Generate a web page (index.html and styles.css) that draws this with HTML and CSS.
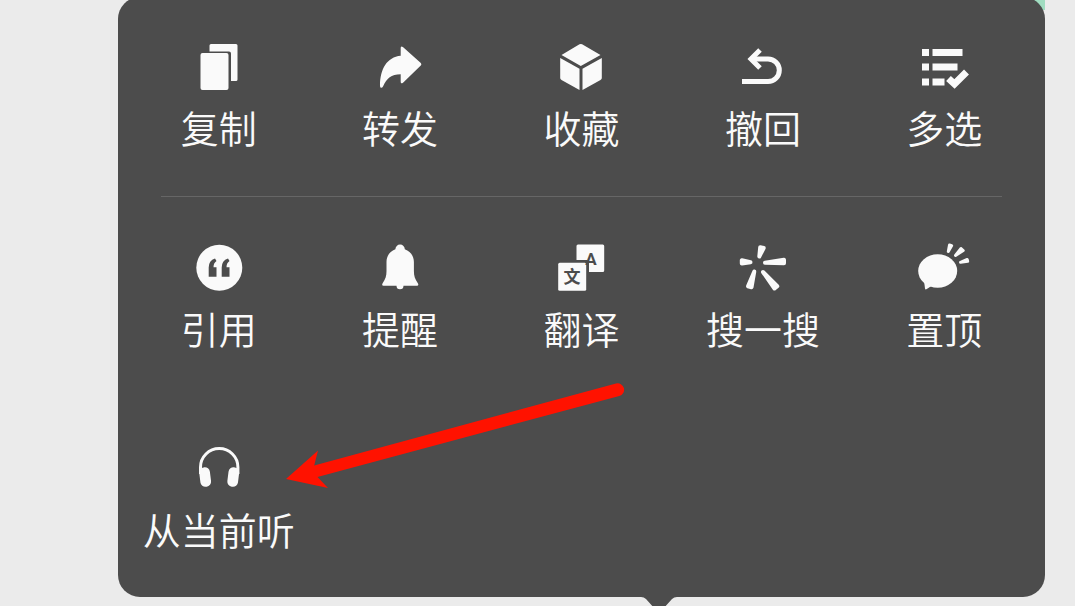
FILE: index.html
```html
<!DOCTYPE html>
<html lang="zh-CN">
<head>
    <meta charset="UTF-8">
    <meta name="viewport" content="width=device-width, initial-scale=1.0">
    <title>消息菜单</title>
    <link rel="stylesheet" href="styles.css">
</head>
<body>
    <div class="bubble"></div>
    <main class="menu">
        <div class="menu-row">
            <button class="item" type="button">
                <svg viewBox="0 0 48 48" aria-hidden="true">
                    <path d="M16 1h25a1.500 1.500 0 0 1 1.500 1.500v34a1.500 1.500 0 0 1-1.500 1.500H36V10.500q0-2-2-2H14.500v-6A1.500 1.500 0 0 1 16 1z"/>
                    <rect x="5.500" y="10" width="28" height="37" rx="2"/>
                </svg>
                <span>复制</span>
            </button>
            <button class="item" type="button">
                <svg viewBox="0 0 48 48" aria-hidden="true">
                    <path d="M24.700 12.700V5q0-2.500 2.200-1L44.800 20q1.200 1.200 0 2.500L27 39.800q-2.300 1.500-2.300-1V31.300C15 31.500 11 35 7 43.500q-.8 1.500-2 1.300-1-.2-1-2C4 26 11 14 24.700 12.700z"/>
                </svg>
                <span>转发</span>
            </button>
            <button class="item" type="button">
                <svg viewBox="0 0 48 48" aria-hidden="true">
                    <path d="M22.500 1.300q1.300-.8 2.600 0L43.500 12 23.800 22.900 4.500 12z"/>
                    <path d="M3.200 15l19.300 10.700V47L4.500 37q-1.300-.8-1.300-2z"/>
                    <path d="M44.800 15L25.500 25.700V47l18-10q1.300-.8 1.300-2z"/>
                </svg>
                <span>收藏</span>
            </button>
            <button class="item" type="button">
                <svg class="line" viewBox="0 0 48 48" aria-hidden="true">
                    <path d="M3 38.500h26a11.300 11.300 0 0 0 0-22.600H12"/>
                    <path d="M21 7l-9 9 9 9"/>
                </svg>
                <span>撤回</span>
            </button>
            <button class="item" type="button">
                <svg viewBox="0 0 48 48" aria-hidden="true">
                    <path d="M2 6h7v7H2zM12.500 6h30v7h-30zM2 20.500h7v7H2zM12.500 20.500h25v7h-25zM2 35.500h7v7H2zM12.500 35.500h12v7h-12z"/>
                    <path class="check" d="M28.500 35.500l6 5.500L46.500 29"/>
                </svg>
                <span>多选</span>
            </button>
        </div>

        <hr class="divider">

        <div class="menu-row">
            <button class="item" type="button">
                <svg viewBox="0 0 48 48" aria-hidden="true">
                    <circle cx="24.300" cy="23.700" r="23"/>
                    <path class="cut" d="M13.700 32.700V23.500q0-7 6.300-9l1.500 2.500q-3 2-3 6.300h3v9.400zM26.700 32.700V23.500q0-7 6.300-9l1.500 2.500q-3 2-3 6.300h3v9.400z"/>
                </svg>
                <span>引用</span>
            </button>
            <button class="item" type="button">
                <svg viewBox="0 0 48 48" aria-hidden="true">
                    <path d="M19.400 5.300a4.700 4.700 0 0 1 9.400 0C34.500 7.500 37.900 12 37.900 18v9c0 5 1 8 4.100 12.500q1 2.200-1 2.200H27.500a3.500 3.500 0 0 1-7 0H7.500q-2 0-1-2.200C9.500 35 10.500 32 10.500 27v-9c0-6 3.200-10.500 8.900-12.700z"/>
                </svg>
                <span>提醒</span>
            </button>
            <button class="item" type="button">
                <svg viewBox="0 0 48 48" aria-hidden="true">
                    <path d="M21 .5h24.700a1.500 1.500 0 0 1 1.500 1.500v24.500a1.500 1.500 0 0 1-1.500 1.500H32V18q0-2-2-2H19.500V2A1.500 1.500 0 0 1 21 .5z"/>
                    <rect x="1.200" y="18.700" width="28" height="28" rx="1.500"/>
                    <text class="glyph glyph-latin" x="34" y="21">A</text>
                    <text class="glyph" x="15" y="39">文</text>
                </svg>
                <span>翻译</span>
            </button>
            <button class="item" type="button">
                <svg class="taper" viewBox="0 0 48 48" aria-hidden="true">
                    <path d="M20.300 12.500L21.200 3.200l3.500.8z"/>
                    <path d="M11.500 18.300L2.800 16.300v3.300z"/>
                    <path d="M26 18.700l19-3v3.600z"/>
                    <path d="M15.300 27.500L9 42.300l3.500 1z"/>
                    <path d="M24 28l11.500 16.500 2.800-2.300z"/>
                </svg>
                <span>搜一搜</span>
            </button>
            <button class="item" type="button">
                <svg viewBox="0 0 48 48" aria-hidden="true">
                    <ellipse cx="17.700" cy="27" rx="19.500" ry="16.700"/>
                    <path d="M4 37l1 7.500q.3 1.500 1.800.6L13 41z"/>
                    <g class="rays">
                        <path d="M28.300 7.500L29.500 1l2.200.6z"/>
                        <path d="M35.500 11.500L41 4.500l2.200 2z"/>
                        <path d="M40.500 18.300l6.700-2.800.5 1.800z"/>
                    </g>
                </svg>
                <span>置顶</span>
            </button>

            <button class="item" type="button">
                <svg viewBox="0 0 48 48" aria-hidden="true">
                    <path class="band" d="M5.500 29V22.200a18.700 18.700 0 0 1 37.400 0V29"/>
                    <rect x="4.800" y="22.300" width="10.700" height="19.500" rx="5" transform="rotate(-7 10 32)"/>
                    <rect x="32.900" y="22.300" width="10.700" height="19.500" rx="5" transform="rotate(7 38.400 32)"/>
                </svg>
                <span>从当前听</span>
            </button>
        </div>

        <!-- red arrow pointing at the last item -->
        <svg class="arrow" viewBox="0 0 340 102" aria-hidden="true">
            <path d="M1 92L33 63.500 29.200 78.400 331-3.500A6.400 6.400 0 0 1 334.300 9L32.500 90 43 101z"/>
        </svg>
        <svg class="pointer" viewBox="0 0 36 20" aria-hidden="true">
            <path d="M0 0q3 0 5 2l9 10q4 4 8 0L31 2q2-2 5-2z"/>
        </svg>
    </main>
</body>
</html>
```
FILE: styles.css
```css
* {
    margin: 0;
    padding: 0;
    box-sizing: border-box;
}

body {
    min-height: 100vh;
    padding: 0 30px 0 118px;
    background: #ebebeb;
    font-family: "Noto Sans CJK SC", sans-serif;
    position: relative;
    overflow: hidden;
}

/* the message bubble behind the menu */
.bubble {
    position: absolute;
    top: 0;
    right: 30px;
    width: 200px;
    height: 10px;
    background: #a0dcc0;
}

.menu {
    position: relative;
    margin-top: -3px;
    padding: 46px 10px 44px;
    background: #4c4c4c;
    border-radius: 22px;
}

.menu-row {
    display: grid;
    grid-template-columns: repeat(5, 1fr);
    row-gap: 93px;
}

.item {
    display: flex;
    flex-direction: column;
    align-items: center;
    gap: 12px;
    border: none;
    background: none;
    color: #fafafa;
    font-family: inherit;
    font-size: 38px;
    font-weight: 350;
    line-height: 48px;
    white-space: nowrap;
    cursor: pointer;
}

.item svg {
    width: 48px;
    height: 48px;
    fill: #fafafa;
    overflow: visible;
}

.divider {
    height: 1px;
    margin: 45px 33px 47px;
    border: none;
    background: #666;
}

.item .line {
    fill: none;
    stroke: #fafafa;
    stroke-width: 5;
}

.check {
    fill: none;
    stroke: #fafafa;
    stroke-width: 7;
}

.cut {
    fill: #4c4c4c;
}

.glyph {
    fill: #4c4c4c;
    font-size: 17px;
    font-weight: 700;
    text-anchor: middle;
}

.glyph-latin {
    font-family: Roboto, sans-serif;
}

.taper {
    stroke: #fafafa;
    stroke-width: 4;
    stroke-linejoin: round;
}

.rays {
    stroke: #fafafa;
    stroke-width: 3;
    stroke-linejoin: round;
}

.band {
    fill: none;
    stroke: #fafafa;
    stroke-width: 3;
}

.arrow {
    position: absolute;
    left: 167px;
    top: 390px;
    width: 340px;
    height: 102px;
    fill: #ff1200;
    overflow: visible;
}

.pointer {
    position: absolute;
    top: 100%;
    left: 523px;
    width: 36px;
    height: 20px;
    fill: #4c4c4c;
}
```
